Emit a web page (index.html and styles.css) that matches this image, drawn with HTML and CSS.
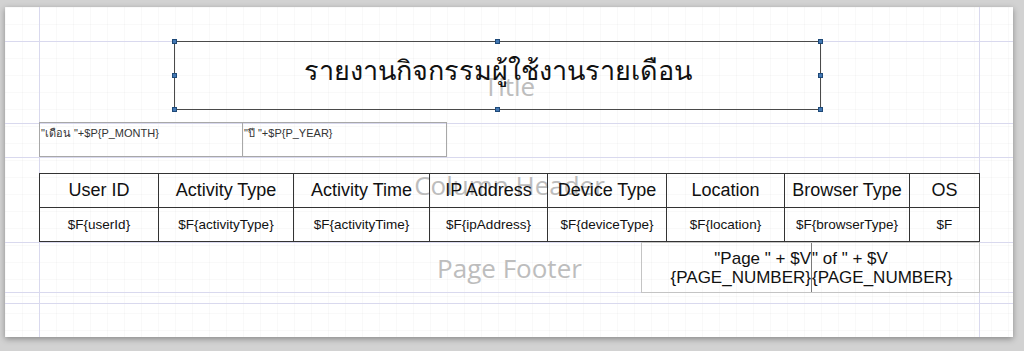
FILE: index.html
```html
<!DOCTYPE html>
<html lang="th">
<head>
<meta charset="UTF-8">
<meta name="viewport" content="width=device-width, initial-scale=1.0">
<title>User Activity Report - Designer</title>
<link rel="stylesheet" href="styles.css">
</head>
<body>
    <div id="page">
        <div class="band" id="top-margin"></div>

        <div class="band" id="title-band">
            <span class="band-label">Title</span>
            <div id="title-box">
                <p>รายงานกิจกรรมผู้ใช้งานรายเดือน</p>
                <i class="handle h-tl"></i>
                <i class="handle h-tm"></i>
                <i class="handle h-tr"></i>
                <i class="handle h-ml"></i>
                <i class="handle h-mr"></i>
                <i class="handle h-bl"></i>
                <i class="handle h-bm"></i>
                <i class="handle h-br"></i>
            </div>
        </div>

        <div class="band" id="page-header">
            <div id="param-row">
                <div class="param-field">"เดือน "+$P{P_MONTH}</div>
                <div class="param-field">"ปี "+$P{P_YEAR}</div>
            </div>
        </div>

        <div class="band" id="column-header">
            <span class="band-label">Column Header</span>
            <div class="table-row head-row">
                <div class="cell">User ID</div>
                <div class="cell">Activity Type</div>
                <div class="cell">Activity Time</div>
                <div class="cell">IP Address</div>
                <div class="cell">Device Type</div>
                <div class="cell">Location</div>
                <div class="cell">Browser Type</div>
                <div class="cell">OS</div>
            </div>
        </div>

        <div class="band" id="detail">
            <div class="table-row detail-row">
                <div class="cell">$F{userId}</div>
                <div class="cell">$F{activityType}</div>
                <div class="cell">$F{activityTime}</div>
                <div class="cell">$F{ipAddress}</div>
                <div class="cell">$F{deviceType}</div>
                <div class="cell">$F{location}</div>
                <div class="cell">$F{browserType}</div>
                <div class="cell">$F</div>
            </div>
        </div>

        <div class="band" id="page-footer">
            <span class="band-label">Page Footer</span>
            <div id="page-number">
                <div class="pn-left">"Page " + $V<br>{PAGE_NUMBER}</div>
                <div class="pn-right">" of " + $V<br>{PAGE_NUMBER}</div>
            </div>
        </div>

        <div class="band" id="summary"></div>
        <div class="band" id="bottom-margin"></div>
    </div>
</body>
</html>
```

FILE: styles.css
```css
body {
    margin: 0;
    padding: 7px 11px 0 5px;
    height: 351px;
    box-sizing: border-box;
    overflow: hidden;
    background-color: #d2d2d2;
    font-family: "Liberation Sans", Arial, sans-serif;
    color: #111;
}
#page {
    width: 1008px;
    height: 330px;
    background-color: #fff;
    background-image:
        linear-gradient(#d9d9ee, #d9d9ee),
        linear-gradient(#d9d9ee, #d9d9ee),
        linear-gradient(to right, rgba(0, 0, 0, 0.022) 1px, transparent 1px),
        linear-gradient(to bottom, rgba(0, 0, 0, 0.022) 1px, transparent 1px);
    background-size: 1px 100%, 1px 100%, 17px 17px, 17px 17px;
    background-position: 34px 0, 974px 0, 34px 0, 0 34px;
    background-repeat: no-repeat, no-repeat, repeat, repeat;
    box-shadow: 0 2px 6px rgba(0, 0, 0, 0.35);
    overflow: hidden;
}
.band {
    display: grid;
    box-sizing: border-box;
    padding: 0 33px 0 34px;
    border-bottom: 1px solid #d9d9ee;
}
.band > * {
    grid-area: 1 / 1;
}
.band-label {
    justify-self: center;
    align-self: center;
    font-family: "Open Sans", "Noto Sans", sans-serif;
    font-size: 26px;
    color: #bdbdbd;
}
#top-margin {
    height: 35px;
}
#title-band {
    height: 82px;
}
#title-band .band-label {
    margin-top: 6px;
}
#title-box {
    position: relative;
    align-self: start;
    margin: -1px 0 0 135px;
    width: 647px;
    height: 69px;
    box-sizing: border-box;
    border: 1px solid #4a4a4a;
    display: flex;
    align-items: center;
    justify-content: center;
}
#title-box p {
    margin: 0 0 10px 0;
    font-family: "Noto Sans", "Open Sans", sans-serif;
    font-size: 27px;
    color: #111;
}
.handle {
    position: absolute;
    width: 5px;
    height: 5px;
    box-sizing: border-box;
    background-color: #4277b3;
    border: 1px solid #1f4a78;
}
.h-tl { left: -3px; top: -3px; }
.h-tm { left: calc(50% - 3px); top: -3px; }
.h-tr { right: -3px; top: -3px; }
.h-ml { left: -3px; top: calc(50% - 3px); }
.h-mr { right: -3px; top: calc(50% - 3px); }
.h-bl { left: -3px; bottom: -3px; }
.h-bm { left: calc(50% - 3px); bottom: -3px; }
.h-br { right: -3px; bottom: -3px; }
#page-header {
    height: 34px;
}
#param-row {
    display: flex;
    align-self: start;
    margin-top: -2px;
}
.param-field {
    width: 204px;
    height: 35px;
    box-sizing: border-box;
    border: 1px solid #a8a8a8;
    padding: 1px 0 0 1px;
    font-size: 11px;
    color: #333;
}
.param-field + .param-field {
    margin-left: -1px;
    width: 205px;
}
#column-header {
    height: 50px;
    border-bottom: none;
}
#column-header .band-label {
    margin-top: 4px;
}
#detail {
    height: 35px;
}
.table-row {
    display: grid;
    grid-template-columns: 119px 135px 136px 118px 119px 118px 125px 71px;
}
.head-row {
    align-self: end;
}
.detail-row {
    align-self: start;
}
.cell {
    display: flex;
    align-items: center;
    justify-content: center;
    box-sizing: border-box;
    border-left: 1px solid #333;
    white-space: nowrap;
}
.cell:last-child {
    border-right: 1px solid #333;
}
.head-row .cell {
    height: 35px;
    border-top: 1px solid #333;
    border-bottom: 1px solid #333;
    font-size: 18px;
}
.detail-row .cell {
    height: 34px;
    border-bottom: 1px solid #333;
    font-size: 13.5px;
}
#page-footer {
    height: 50px;
}
#page-number {
    justify-self: end;
    align-self: start;
    margin-top: -1px;
    width: 339px;
    height: 51px;
    box-sizing: border-box;
    border: 1px solid #c4c4c4;
    display: flex;
    align-items: center;
    font-size: 17px;
    line-height: 19px;
    white-space: nowrap;
}
.pn-left {
    width: 169px;
    text-align: right;
}
.pn-right {
    flex: 1;
    align-self: stretch;
    display: flex;
    align-items: center;
    border-left: 1px solid #7a7a7a;
}
#summary {
    height: 11px;
}
#bottom-margin {
    height: 33px;
    border-bottom: none;
}
```
